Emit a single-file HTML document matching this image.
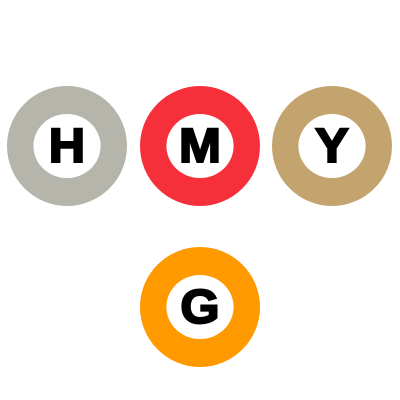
<!DOCTYPE html>
<html><head><style>
body{margin:0;width:400px;height:400px;background:#fff;position:relative;overflow:hidden}
.c{position:absolute;width:120px;height:120px;border-radius:50%;}
.c i{position:absolute;left:28px;top:28px;width:64px;height:64px;border-radius:50%;background:#fff;font:normal 700 48px/66px "Liberation Sans",sans-serif;text-align:center;color:#000;font-style:normal;-webkit-text-stroke:2px #000;transform:scaleX(1.05)}
</style></head><body>
<div class="c" style="left:7px;top:86px;background:#b5b5ab"><i>H</i></div>
<div class="c" style="left:140px;top:86px;background:#f5303a"><i>M</i></div>
<div class="c" style="left:272px;top:86px;background:#c4a46e"><i>Y</i></div>
<div class="c" style="left:140px;top:247px;background:#ff9900"><i>G</i></div>
</body></html>
